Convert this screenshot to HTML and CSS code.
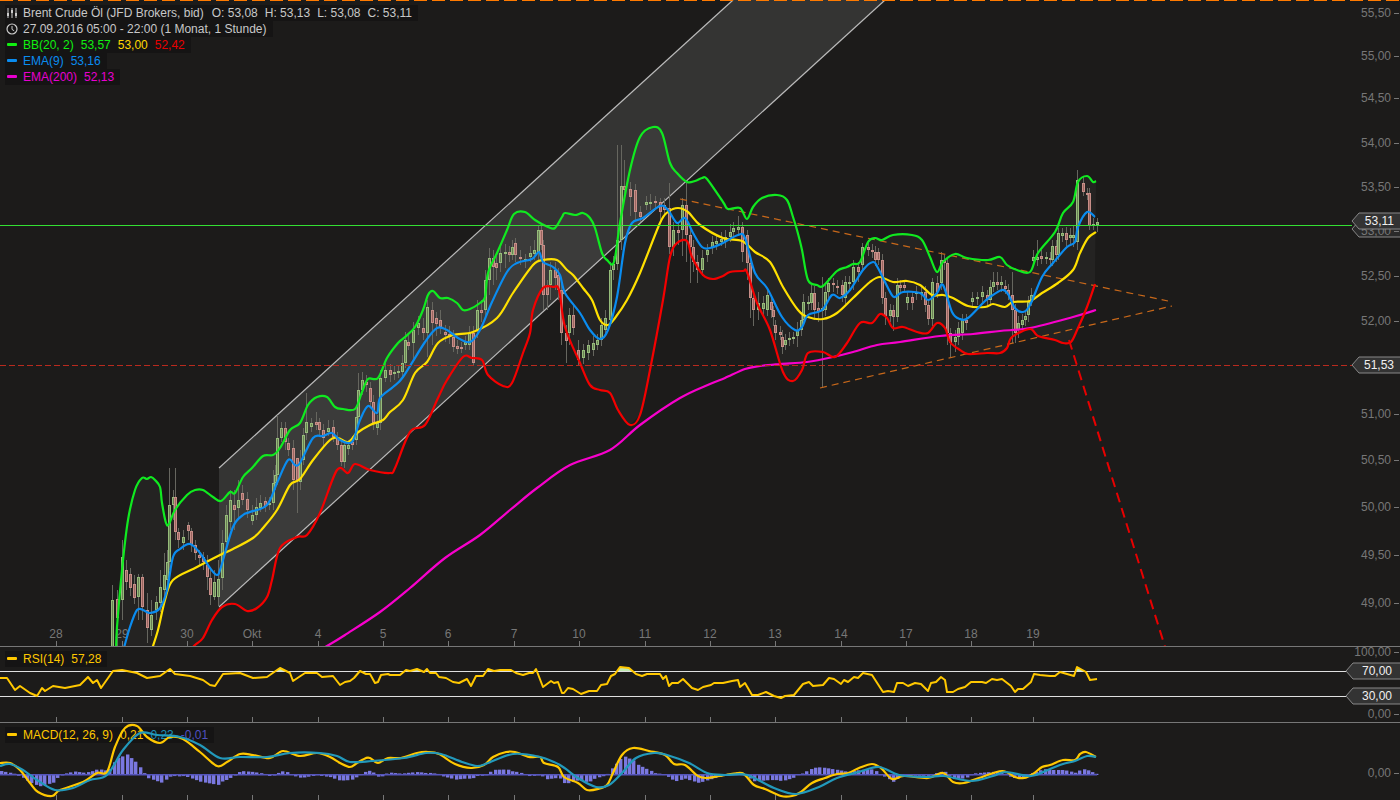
FILE: index.html
```html
<!DOCTYPE html>
<html lang="en">
<head>
    <meta charset="UTF-8">
    <title>Brent Crude Öl</title>
    <link rel="stylesheet" href="styles.css">
</head>
<body>
    <div class="chart">
        <div class="pane pane-main">
            <ul class="legend">
                <li class="legend-row">
                    <svg class="legend-icon" viewBox="0 0 12 12"><path d="M2 1v10M6 1v10M10 1v10" stroke="#ccc" fill="none"/><path d="M1 6h2v3H1zM5 3h2v3H5zM9 6h2v3H9z" fill="#ccc"/></svg>
                    <span class="legend-name">Brent Crude Öl (JFD Brokers, bid)</span>
                    <span>O: 53,08</span><span>H: 53,13</span><span>L: 53,08</span><span>C: 53,11</span>
                </li>
                <li class="legend-row">
                    <svg class="legend-icon" viewBox="0 0 12 12"><circle cx="6" cy="6" r="5" stroke="#ccc" fill="none" stroke-width="1.2"/><path d="M6 3v3.4l2.2 1.4" stroke="#ccc" fill="none"/></svg>
                    <span>27.09.2016 05:00 - 22:00 (1 Monat, 1 Stunde)</span>
                </li>
                <li class="legend-row c-green">
                    <i class="dash"></i><span>BB(20, 2)</span><span>53,57</span><span class="c-yellow">53,00</span><span class="c-red">52,42</span>
                </li>
                <li class="legend-row c-blue">
                    <i class="dash"></i><span>EMA(9)</span><span>53,16</span>
                </li>
                <li class="legend-row c-magenta">
                    <i class="dash"></i><span>EMA(200)</span><span>52,13</span>
                </li>
            </ul>
            <svg id="main-svg" viewBox="0 0 1400 646"></svg>
        </div>
        <div class="pane pane-rsi">
            <ul class="legend">
                <li class="legend-row c-amber">
                    <i class="dash"></i><span>RSI(14)</span><span>57,28</span>
                </li>
            </ul>
            <svg id="rsi-svg" viewBox="0 647 1400 75"></svg>
        </div>
        <div class="pane pane-macd">
            <ul class="legend">
                <li class="legend-row c-amber">
                    <i class="dash"></i><span>MACD(12, 26, 9)</span><span>0,21</span><span class="c-teal">0,23</span><span class="c-purple">-0,01</span>
                </li>
            </ul>
            <svg id="macd-svg" viewBox="0 723 1400 77"></svg>
        </div>
    </div>
    <script src="chart.js"></script>
</body>
</html>
```

FILE: styles.css
```css
html, body {
    margin: 0;
    height: 100%;
    background-color: #1c1b1a;
    overflow: hidden;
}
.chart {
    display: flex;
    flex-direction: column;
    width: 1400px;
    height: 800px;
    font-family: "Liberation Sans", Arial, sans-serif;
    font-size: 12px;
}
.pane {
    position: relative;
    flex: none;
}
.pane svg {
    display: block;
    width: 1400px;
    height: 100%;
}
.pane > svg {
    position: relative;
}
.pane-main {
    height: 646px;
    border-bottom: 1px solid #777;
}
.pane-rsi {
    height: 75px;
    border-bottom: 1px solid #777;
}
#rsi-svg {
    overflow: visible;
}
.pane-macd {
    height: 77px;
}
.legend {
    position: absolute;
    left: 5px;
    top: 5px;
    margin: 0;
    padding: 0;
    list-style: none;
    display: flex;
    flex-direction: column;
    align-items: flex-start;
}
.legend-row {
    display: flex;
    align-items: center;
    gap: 7px;
    height: 16px;
    padding-left: 18px;
    padding-right: 6px;
    position: relative;
    background-color: #151414;
    color: #c8c8c8;
    white-space: nowrap;
}
.legend-name {
    margin-right: 1px;
}
.pane-rsi .legend {
    top: 4px;
}
.pane-macd .legend {
    top: 4px;
}
.pane .legend-icon {
    position: absolute;
    left: 1px;
    top: 2px;
    width: 12px;
    height: 12px;
}
.dash {
    position: absolute;
    left: 2px;
    top: 6px;
    width: 10px;
    height: 3px;
    border-radius: 1px;
    background-color: currentColor;
}
.c-green { color: #10f010; }
.c-yellow { color: #ffd800; }
.c-red { color: #e80000; }
.c-blue { color: #0a8cf0; }
.c-magenta { color: #e800d0; }
.c-amber { color: #ffc800; }
.c-teal { color: #1f8fb4; }
.c-purple { color: #5050c0; }
.axis-text {
    fill: #777;
    font-size: 12px;
}
.tag-text {
    fill: #f0f0f0;
    font-size: 12px;
    text-anchor: end;
}
```

FILE: chart.js
```js
const NS = 'http://www.w3.org/2000/svg';

// x, body top, body bottom, u/d, wick top, wick bottom
const candles = [
    [112,600,650,'u',585,650],[117,599,618,'d',590,650],[122,557,600,'u',540,620],[126,570,582,'d',560,590],[130,574,588,'d',568,596],
    [134,584,598,'d',575,604],[138,577,597,'u',574,620],[142,577,607,'d',574,620],[147,610,628,'d',593,643],[151,615,630,'u',600,636],
    [156,602,610,'u',596,620],[160,587,603,'u',570,612],[164,575,590,'u',553,600],[167,562,580,'u',550,585],[169,505,562,'u',468,570],
    [173,497,505,'u',490,520],[175,497,532,'d',468,540],[178,532,540,'d',528,548],[183,537,543,'u',530,550],[188,525,531,'d',522,540],
    [191,531,545,'d',528,552],[195,545,553,'d',540,560],[199,555,558,'d',550,566],[203,557,562,'d',552,570],[207,565,577,'d',555,590],
    [210,578,595,'d',570,605],[214,582,597,'u',570,600],[218,579,597,'u',560,606],[222,543,578,'u',530,590],[226,515,542,'u',505,550],
    [230,500,522,'u',490,530],[234,505,510,'d',490,530],[238,500,508,'u',480,520],[242,493,500,'d',485,505],[247,499,510,'d',492,518],
    [252,515,521,'u',505,525],[256,507,515,'u',498,520],[260,503,508,'u',495,512],[265,501,506,'d',497,512],[269,503,505,'u',497,510],
    [273,483,503,'u',470,510],[275,475,483,'u',465,490],[277,438,475,'u',415,485],[281,428,438,'u',422,442],[285,428,442,'d',422,450],
    [288,443,450,'d',438,456],[293,448,480,'d',440,490],[297,458,480,'d',470,513],[300,462,482,'u',450,490],[303,435,460,'u',428,465],
    [306,422,433,'u',393,440],[311,423,427,'u',418,432],[316,422,425,'d',412,430],[319,422,430,'d',418,436],[323,430,438,'d',424,446],
    [328,428,432,'u',420,436],[333,427,437,'d',420,442],[337,438,445,'d',432,450],[341,445,462,'d',440,466],[344,445,462,'u',440,468],
    [348,445,449,'u',440,455],[352,442,445,'d',436,450],[356,417,440,'u',405,445],[358,390,417,'u',373,422],[362,380,390,'u',372,395],
    [366,382,385,'d',375,392],[370,388,402,'d',382,408],[373,402,423,'d',395,430],[377,423,428,'u',415,435],[380,378,423,'u',370,430],
    [385,370,378,'u',362,382],[390,370,375,'d',364,382],[394,372,374,'u',366,380],[398,371,373,'u',365,378],[402,363,372,'u',355,378],
    [405,340,363,'u',332,368],[408,342,346,'d',335,350],[413,330,343,'u',322,360],[418,323,328,'u',316,335],[423,328,333,'d',318,340],
    [427,307,333,'u',300,357],[432,310,323,'d',302,345],[436,318,324,'d',312,336],[440,320,327,'d',310,334],[445,332,335,'d',325,342],
    [449,334,337,'d',326,344],[453,337,347,'d',330,352],[457,346,349,'d',340,354],[461,347,349,'d',342,353],[465,342,345,'u',336,350],
    [469,333,345,'u',326,350],[473,333,363,'d',326,366],[477,310,330,'u',300,338],[481,310,313,'d',300,322],[485,280,310,'u',270,318],
    [489,258,280,'u',248,295],[493,258,267,'d',250,285],[496,263,268,'d',256,280],[500,253,263,'u',245,272],[505,252,254,'u',244,268],
    [509,252,255,'d',246,262],[512,247,255,'u',240,260],[515,243,255,'d',238,262],[520,257,259,'d',250,265],[525,259,261,'u',254,268],
    [530,253,257,'u',246,262],[534,250,254,'u',240,260],[538,230,252,'u',226,260],[541,230,245,'d',225,250],[543,245,295,'d',240,310],
    [547,285,295,'d',280,310],[550,270,285,'u',262,300],[555,270,278,'d',262,290],[558,275,290,'d',268,300],[561,290,333,'d',284,345],
    [566,333,341,'d',325,363],[569,315,333,'u',308,345],[573,315,328,'d',305,335],[578,350,360,'d',340,365],[583,350,358,'u',344,364],
    [588,345,353,'u',340,360],[593,343,350,'u',336,356],[597,340,345,'u',334,350],[601,325,340,'u',318,346],[605,318,330,'u',310,336],
    [610,270,320,'u',262,325],[613,264,270,'u',256,280],[617,240,264,'u',145,270],[621,186,240,'u',145,250],[624,186,190,'d',160,200],
    [630,189,197,'d',182,216],[635,190,212,'d',184,220],[640,212,217,'d',206,222],[646,202,205,'u',196,210],[650,202,204,'u',194,210],
    [655,201,203,'d',196,210],[660,202,212,'d',198,220],[664,205,210,'d',198,216],[669,208,247,'d',183,254],[673,230,247,'u',222,256],
    [678,230,233,'d',222,245],[682,205,230,'u',198,256],[686,205,235,'d',183,262],[690,235,247,'d',228,283],[693,247,262,'d',240,272],
    [697,262,270,'d',255,283],[702,258,270,'u',250,276],[707,250,255,'u',244,262],[712,242,248,'u',236,254],[716,241,244,'u',234,250],
    [721,239,242,'u',232,246],[725,237,242,'u',230,248],[730,232,237,'u',224,242],[733,228,232,'u',222,238],[738,227,230,'u',216,236],
    [742,227,252,'d',222,262],[747,235,263,'d',230,280],[750,263,298,'d',258,318],[753,298,310,'d',292,326],[758,303,310,'u',292,320],
    [763,303,309,'u',296,318],[767,295,310,'u',290,316],[771,302,310,'d',298,318],[773,310,317,'d',306,326],[775,325,333,'d',320,340],
    [780,332,335,'d',326,340],[782,337,347,'d',330,354],[785,340,345,'u',334,350],[789,338,340,'u',332,346],[793,337,339,'u',332,344],
    [797,330,336,'u',322,347],[801,320,330,'u',312,336],[803,302,320,'u',294,326],[808,302,304,'u',296,310],[811,293,303,'u',285,310],
    [814,293,310,'d',286,320],[818,308,312,'d',302,322],[822,308,311,'u',277,387],[825,292,310,'u',284,316],[828,283,292,'u',278,298],
    [833,283,285,'d',278,292],[837,286,288,'d',280,294],[842,285,295,'d',280,302],[845,282,298,'u',276,304],[849,282,284,'u',276,290],
    [853,267,282,'u',260,290],[858,267,272,'d',262,282],[862,247,265,'u',243,272],[868,247,250,'d',240,256],[872,250,252,'d',244,258],
    [875,252,260,'d',246,266],[878,252,260,'d',248,265],[882,260,298,'d',254,304],[885,298,316,'d',292,325],[890,310,316,'u',304,322],
    [893,310,317,'d',305,331],[897,285,317,'u',278,322],[900,285,288,'d',280,293],[904,285,288,'d',280,292],[907,297,303,'u',292,310],
    [912,297,303,'d',292,310],[916,292,294,'u',286,300],[921,292,294,'u',286,300],[925,292,305,'d',286,312],[928,305,319,'d',300,325],
    [932,282,319,'u',278,326],[937,283,292,'d',276,298],[941,260,283,'u',252,290],[944,260,263,'d',255,270],[947,263,333,'d',258,345],
    [950,333,343,'d',328,357],[955,337,342,'u',330,352],[958,328,337,'u',322,345],[962,320,333,'u',314,340],[966,320,323,'d',314,330],
    [972,298,302,'u',292,308],[977,297,299,'u',292,305],[982,292,297,'u',286,303],[987,295,300,'d',290,306],[990,287,300,'u',280,306],
    [993,282,287,'u',272,292],[997,282,285,'d',272,290],[1001,282,285,'u',276,292],[1005,286,289,'d',280,294],[1008,290,295,'d',284,300],
    [1012,295,310,'d',272,343],[1015,310,333,'d',304,343],[1018,323,330,'u',316,338],[1022,320,325,'u',314,330],[1025,316,320,'u',310,326],
    [1028,302,315,'u',296,322],[1031,295,302,'u',288,306],[1033,257,261,'u',250,266],[1037,257,260,'u',240,266],[1041,256,259,'d',250,264],
    [1046,257,259,'u',252,264],[1050,258,260,'d',252,266],[1052,246,260,'u',240,266],[1056,246,255,'d',240,262],[1058,233,255,'u',228,260],
    [1062,233,236,'u',228,242],[1066,233,240,'d',227,246],[1070,235,238,'u',228,244],[1073,235,238,'u',226,247],[1077,180,242,'u',170,250],
    [1083,183,192,'d',176,196],[1087,193,195,'d',188,200],[1089,193,226,'d',188,230],[1093,224,226,'u',218,230],[1097,222,225,'u',218,232]
];

const bbUpper = [[116,650],[117,627],[122,570],[128,520],[135,490],[142,478],[147,479],[151,477],[155,480],[160,487],[162,503],[166,523],[169,524],[175,510],[187,495],[195,490],[203,490],[213,497],[221,501],[230,492],[235,493],[243,477],[252,468],[263,456],[273,455],[280,448],[290,430],[300,423],[308,405],[317,397],[327,397],[335,407],[343,409],[355,409],[362,392],[368,379],[378,378],[387,358],[398,343],[405,337],[415,327],[423,310],[428,295],[433,291],[440,298],[448,298],[457,303],[463,310],[470,309],[480,303],[485,297],[488,273],[497,253],[507,230],[514,214],[525,212],[535,220],[548,227],[555,228],[562,217],[565,213],[575,215],[583,213],[590,218],[595,228],[602,253],[607,260],[614,262],[620,223],[630,170],[640,137],[653,127],[662,133],[670,163],[677,173],[687,182],[695,181],[702,178],[707,179],[723,202],[728,209],[740,208],[747,219],[753,207],[762,198],[777,195],[787,200],[793,217],[797,230],[802,250],[808,280],[817,285],[823,286],[837,271],[847,267],[853,264],[860,262],[868,242],[875,238],[882,240],[893,235],[912,235],[922,240],[930,257],[937,272],[943,262],[955,254],[967,258],[988,260],[1000,257],[1007,265],[1017,270],[1030,272],[1038,253],[1055,232],[1063,213],[1073,202],[1078,182],[1087,176],[1093,182],[1096,181]];

const bbMid = [[150,655],[158,630],[165,600],[173,580],[197,567],[220,555],[233,549],[253,538],[263,528],[277,510],[290,485],[300,479],[313,460],[330,440],[338,438],[348,442],[357,433],[370,425],[383,420],[390,412],[403,400],[415,373],[427,362],[438,343],[453,335],[473,332],[497,318],[513,293],[533,265],[543,260],[557,260],[567,270],[573,275],[583,288],[592,300],[600,320],[608,325],[615,318],[627,300],[640,273],[660,223],[668,212],[678,208],[688,212],[700,225],[723,238],[742,241],[755,252],[770,262],[783,287],[798,310],[808,317],[823,319],[837,313],[853,298],[870,282],[880,277],[893,282],[907,281],[920,285],[932,295],[943,295],[953,298],[968,306],[985,307],[993,304],[1005,307],[1013,302],[1030,301],[1042,293],[1058,283],[1073,270],[1080,253],[1088,238],[1096,232]];

const bbLower = [[185,655],[195,645],[203,638],[212,620],[222,607],[235,604],[247,611],[257,608],[267,597],[272,580],[280,548],[297,537],[307,535],[320,513],[337,470],[348,473],[355,464],[370,470],[390,473],[395,468],[410,432],[425,425],[438,398],[447,380],[463,357],[472,358],[482,360],[488,375],[503,386],[512,383],[523,353],[530,333],[533,310],[543,288],[553,287],[559,290],[565,327],[580,363],[590,385],[600,390],[610,393],[618,410],[630,425],[640,415],[650,370],[663,300],[670,257],[677,243],[687,241],[692,257],[703,275],[713,279],[723,276],[730,272],[743,271],[747,272],[757,303],[770,330],[783,372],[793,381],[802,370],[808,353],[823,352],[835,357],[847,343],[860,323],[872,323],[880,314],[887,318],[893,328],[903,327],[917,332],[928,333],[937,323],[945,328],[950,342],[960,350],[968,354],[987,353],[1000,353],[1007,348],[1012,337],[1030,329],[1038,336],[1055,340],[1063,343],[1071,342],[1078,328],[1087,307],[1095,284]];

const ema9 = [[122,655],[130,627],[137,610],[143,610],[150,613],[160,608],[167,590],[173,557],[180,549],[190,544],[200,553],[210,568],[217,575],[221,567],[233,527],[243,515],[250,512],[267,505],[277,483],[288,460],[295,465],[300,463],[313,438],[323,436],[332,433],[340,440],[352,442],[360,420],[368,406],[377,413],[380,398],[393,387],[403,377],[425,342],[437,328],[447,330],[458,338],[470,342],[480,330],[492,302],[507,272],[517,263],[532,259],[539,252],[543,262],[553,267],[560,275],[565,293],[580,313],[590,330],[600,339],[608,330],[617,297],[625,243],[632,223],[643,218],[660,206],[668,210],[677,223],[685,218],[693,233],[702,247],[710,248],[723,243],[738,235],[745,238],[755,273],[767,288],[782,317],[795,330],[802,327],[808,315],[822,310],[832,295],[840,298],[850,290],[863,270],[873,262],[878,268],[888,288],[894,297],[903,292],[920,293],[928,300],[937,293],[943,285],[952,312],[960,319],[968,318],[983,303],[990,297],[1002,290],[1008,294],[1015,308],[1023,312],[1030,305],[1042,277],[1053,263],[1067,247],[1075,242],[1078,227],[1087,212],[1095,217]];

const ema200 = [[310,655],[327,646],[345,635],[380,612],[410,588],[445,558],[480,535],[510,510],[537,488],[570,465],[610,450],[640,425],[680,398],[710,384],[725,378],[745,369],[760,366],[780,364],[807,362],[833,357],[853,352],[877,345],[900,342],[940,336],[973,334],[1000,331],[1030,328],[1073,317],[1096,310]];

const rsi = [[0,678],[7,678],[15,690],[20,686],[30,693],[37,696],[42,688],[45,691],[53,686],[65,688],[80,685],[88,677],[93,683],[97,680],[101,688],[113,671],[122,670],[137,673],[147,678],[160,676],[170,669],[175,674],[190,676],[203,680],[210,685],[215,686],[223,674],[240,673],[253,678],[267,677],[280,668],[290,673],[293,681],[305,673],[317,673],[322,677],[333,676],[340,685],[345,682],[350,681],[354,678],[360,671],[366,674],[370,674],[375,683],[378,682],[381,675],[388,674],[390,675],[400,675],[406,670],[410,671],[417,669],[424,672],[427,669],[430,673],[436,673],[439,677],[446,678],[453,682],[459,683],[467,679],[471,686],[476,676],[483,676],[488,669],[494,671],[500,670],[511,670],[516,673],[523,675],[529,673],[533,673],[536,669],[543,687],[551,681],[554,683],[558,682],[562,693],[564,693],[568,688],[573,689],[581,694],[589,691],[597,691],[601,685],[607,684],[611,676],[615,674],[620,667],[629,668],[636,674],[642,676],[647,674],[660,674],[663,679],[666,676],[669,686],[672,683],[678,683],[683,679],[692,688],[698,690],[703,687],[711,685],[714,683],[723,683],[732,681],[738,680],[740,687],[745,683],[752,695],[758,695],[766,692],[774,696],[781,698],[785,696],[794,695],[803,684],[809,682],[813,686],[823,685],[829,678],[834,679],[841,684],[844,680],[848,682],[854,677],[858,678],[863,673],[872,675],[883,692],[888,691],[894,692],[897,683],[903,683],[908,686],[915,683],[921,684],[928,691],[931,683],[936,682],[941,677],[945,680],[947,692],[953,692],[958,689],[965,687],[971,682],[982,682],[986,683],[992,679],[997,680],[1002,679],[1011,686],[1015,692],[1018,689],[1023,689],[1031,682],[1034,674],[1040,675],[1050,676],[1055,676],[1060,672],[1074,676],[1077,667],[1086,672],[1090,680],[1097,679]];

const macd = [[0,763],[10,763],[20,770],[30,783],[38,792],[52,796],[60,790],[83,782],[97,773],[107,772],[115,747],[125,728],[137,726],[147,737],[160,743],[170,737],[183,739],[200,752],[217,766],[227,762],[240,754],[253,755],[270,758],[283,751],[300,756],[317,753],[330,757],[340,763],[350,767],[357,763],[366,758],[370,758],[378,763],[388,758],[401,758],[417,753],[428,752],[439,754],[455,764],[471,768],[484,765],[493,757],[506,752],[515,752],[529,757],[540,757],[544,763],[558,767],[564,777],[578,783],[587,790],[598,789],[607,785],[613,773],[622,755],[633,748],[649,751],[665,755],[674,764],[685,765],[698,776],[707,778],[720,776],[738,773],[745,775],[754,785],[765,789],[781,796],[792,796],[801,792],[812,783],[825,778],[837,774],[848,773],[859,768],[872,764],[881,768],[892,779],[904,776],[928,778],[943,773],[953,782],[964,783],[979,778],[1002,771],[1015,777],[1024,778],[1033,774],[1042,767],[1050,765],[1063,760],[1075,760],[1080,754],[1086,752],[1096,757]];

const signal = [[0,766],[10,764],[23,770],[37,780],[55,790],[73,788],[90,780],[107,775],[123,750],[140,733],[157,735],[180,737],[200,745],[220,758],[240,757],[267,757],[290,753],[320,753],[337,756],[350,762],[372,761],[404,758],[426,753],[441,754],[462,762],[477,766],[488,763],[513,754],[540,757],[560,765],[578,778],[596,787],[609,785],[622,773],[636,758],[654,753],[667,755],[689,763],[707,773],[725,775],[747,775],[774,788],[796,794],[819,787],[837,778],[859,772],[879,767],[899,775],[926,777],[944,776],[971,781],[993,776],[1006,772],[1031,776],[1050,769],[1063,764],[1075,761],[1087,756],[1096,757]];

const prices = [['55,50',13],['55,00',56],['54,50',98],['54,00',143],['53,50',187],['53,00',231],['52,50',276],['52,00',321],['51,00',414],['50,50',460],['50,00',507],['49,50',555],['49,00',603]];
const dates = [['28',56],['29',122],['30',187],['Okt',252],['4',318],['5',383],['6',448],['7',514],['10',579],['11',645],['12',710],['13',775],['14',841],['17',906],['18',971],['19',1033]];

function el(parent, name, attrs, text) {
    const node = document.createElementNS(NS, name);
    for (const key in attrs) node.setAttribute(key, attrs[key]);
    if (text !== undefined) node.textContent = text;
    parent.appendChild(node);
    return node;
}

// catmull-rom through the traced points, so the bands stay round
function smooth(pts) {
    let d = 'M' + pts[0][0] + ' ' + pts[0][1];
    for (let i = 0; i < pts.length - 1; i++) {
        const p0 = pts[i - 1] || pts[i];
        const p1 = pts[i];
        const p2 = pts[i + 1];
        const p3 = pts[i + 2] || p2;
        const c1x = p1[0] + (p2[0] - p0[0]) / 6;
        const c1y = p1[1] + (p2[1] - p0[1]) / 6;
        const c2x = p2[0] - (p3[0] - p1[0]) / 6;
        const c2y = p2[1] - (p3[1] - p1[1]) / 6;
        d += 'C' + c1x.toFixed(1) + ' ' + c1y.toFixed(1) + ' ' + c2x.toFixed(1) + ' ' + c2y.toFixed(1) + ' ' + p2[0] + ' ' + p2[1];
    }
    return d;
}

function drawLine(svg, pts, color, width) {
    el(svg, 'path', { d: smooth(pts), fill: 'none', stroke: color, 'stroke-width': width || 2.2, 'stroke-linejoin': 'round' });
}

function interp(pts, x) {
    for (let i = 0; i < pts.length - 1; i++) {
        if (x >= pts[i][0] && x <= pts[i + 1][0]) {
            const t = (x - pts[i][0]) / (pts[i + 1][0] - pts[i][0]);
            return pts[i][1] + t * (pts[i + 1][1] - pts[i][1]);
        }
    }
    return pts[pts.length - 1][1];
}

function tagPoints(y, left) {
    const top = y - 8;
    const notch = left + 7;
    return left + ',' + y + ' ' + notch + ',' + top + ' 1402,' + top + ' 1402,' + (top + 16) + ' ' + notch + ',' + (top + 16);
}

function drawTag(svg, y, left, label) {
    el(svg, 'polygon', { points: tagPoints(y, left), fill: '#333', stroke: '#888' });
    el(svg, 'text', { x: left === 1346 ? 1392 : 1394, y: y + 4, class: 'tag-text' }, label);
}

function drawTicks(svg, bottom) {
    dates.forEach(function (d) {
        el(svg, 'line', { x1: d[1] + 0.5, x2: d[1] + 0.5, y1: bottom - 5, y2: bottom, stroke: '#777' });
    });
}

function drawPriceLabel(svg, label, y) {
    el(svg, 'text', { x: 1391, y: y + 4, 'text-anchor': 'end', class: 'axis-text' }, label);
    el(svg, 'line', { x1: 1394, x2: 1399, y1: y + 0.5, y2: y + 0.5, stroke: '#777' });
}

function drawMain() {
    const svg = document.getElementById('main-svg');

    // price channel
    el(svg, 'polygon', { points: '219,468 733,0 885,0 219,607', fill: '#fff', 'fill-opacity': 0.11 });
    el(svg, 'line', { x1: 219, y1: 468, x2: 733, y2: 0, stroke: '#bbb', 'stroke-width': 1.2 });
    el(svg, 'line', { x1: 219, y1: 607, x2: 885, y2: 0, stroke: '#bbb', 'stroke-width': 1.2 });

    // bollinger band background
    const band = bbUpper.concat(bbLower.filter(p => p[1] < 646).reverse(), [[185, 646], [116, 646]]);
    el(svg, 'polygon', { points: band.map(p => p.join(',')).join(' '), fill: '#fff', 'fill-opacity': 0.035 });

    // the tag of the middle band sits behind the price tag, the 53,00 label peeks out under it
    el(svg, 'polygon', { points: tagPoints(229, 1352), fill: '#2a2a2a', stroke: '#888' });
    prices.forEach(p => drawPriceLabel(svg, p[0], p[1]));
    el(svg, 'line', { x1: 1394, x2: 1399, y1: 365.5, y2: 365.5, stroke: '#777' });
    dates.forEach(d => el(svg, 'text', { x: d[1], y: 638, 'text-anchor': 'middle', class: 'axis-text' }, d[0]));
    drawTicks(svg, 646);

    candles.forEach(function (c) {
        const x = Math.round(c[0]);
        const up = c[3] === 'u';
        el(svg, 'line', { x1: x + 0.5, x2: x + 0.5, y1: c[4], y2: c[5], stroke: '#66665f' });
        el(svg, 'rect', {
            x: x - 0.5, y: c[1] + 0.5, width: 2, height: Math.max(c[2] - c[1] - 1, 1),
            fill: up ? '#6a8055' : '#9a6660', stroke: up ? '#96bc7a' : '#c88e88'
        });
    });

    // trend lines
    el(svg, 'line', { x1: 680, y1: 199, x2: 1168, y2: 301, stroke: '#c8681a', 'stroke-dasharray': '7 5', 'stroke-width': 1.2 });
    el(svg, 'line', { x1: 820, y1: 388, x2: 1172, y2: 306, stroke: '#c8681a', 'stroke-dasharray': '7 5', 'stroke-width': 1.2 });

    drawLine(svg, ema200, '#f800cc');
    drawLine(svg, bbLower, '#f40000');
    drawLine(svg, bbMid, '#ffe000');
    drawLine(svg, bbUpper, '#10ea20');
    drawLine(svg, ema9, '#0a8cf0');

    el(svg, 'line', { x1: 1069, y1: 340, x2: 1166, y2: 650, stroke: '#e80000', 'stroke-width': 2, 'stroke-dasharray': '10 6' });
    el(svg, 'line', { x1: 0, y1: 365.5, x2: 1352, y2: 365.5, stroke: '#b92a1e', 'stroke-dasharray': '6 3' });
    el(svg, 'line', { x1: 0, y1: 225.5, x2: 1352, y2: 225.5, stroke: '#33e033' });
    el(svg, 'line', { x1: 0, y1: 0, x2: 1400, y2: 0, stroke: '#ff7a00', 'stroke-width': 2, 'stroke-dasharray': '13 5' });

    drawTag(svg, 221, 1352, '53,11');
    drawTag(svg, 365, 1352, '51,53');
}

function drawRsi() {
    const svg = document.getElementById('rsi-svg');
    drawPriceLabel(svg, '100,00', 652);
    drawPriceLabel(svg, '0,00', 714);
    drawTicks(svg, 722);

    // pale fill where the rsi runs above the 70 line
    const clip = el(svg, 'clipPath', { id: 'above-70' });
    el(clip, 'rect', { x: 0, y: 647, width: 1400, height: 24 });
    const area = 'M0 671L' + rsi.map(p => p.join(' ')).join('L') + 'L1097 671Z';
    el(svg, 'path', { d: area, fill: '#bfe8b0', 'clip-path': 'url(#above-70)' });

    el(svg, 'line', { x1: 0, y1: 671.5, x2: 1346, y2: 671.5, stroke: '#e0e0e0' });
    el(svg, 'line', { x1: 0, y1: 696.5, x2: 1346, y2: 696.5, stroke: '#e0e0e0' });
    el(svg, 'polyline', { points: rsi.map(p => p.join(',')).join(' '), fill: 'none', stroke: '#ffc800', 'stroke-width': 2, 'stroke-linejoin': 'round' });
    drawTag(svg, 671, 1346, '70,00');
    drawTag(svg, 696, 1346, '30,00');
}

function drawMacd() {
    const svg = document.getElementById('macd-svg');
    drawPriceLabel(svg, '0,00', 773);
    drawTicks(svg, 800);

    for (let x = 0; x < 1096; x += 4.33) {
        const diff = interp(signal, x) - interp(macd, x);
        const px = Math.round(x);
        el(svg, 'rect', { x: px, y: Math.min(774, 774 - diff), width: 3.4, height: Math.abs(diff) + 1, fill: '#7a78e0' });
    }
    el(svg, 'rect', { x: 0, y: 774, width: 1097, height: 1.5, fill: '#5555bb' });

    drawLine(svg, macd, '#ffc800');
    drawLine(svg, signal, '#2299bb');
}

drawMain();
drawRsi();
drawMacd();
```
